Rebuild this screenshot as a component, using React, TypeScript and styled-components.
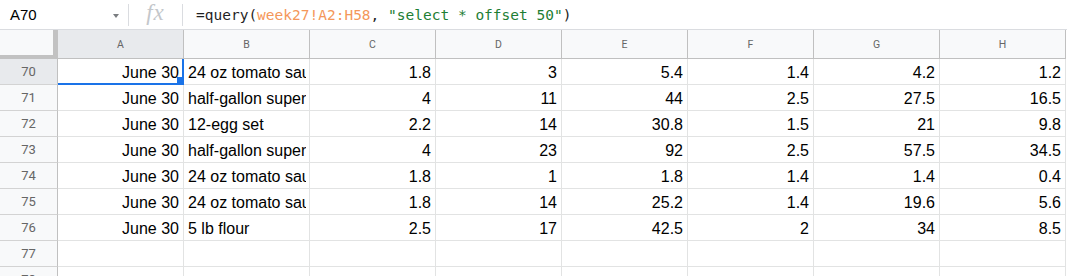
import React from 'react';
import styled, { createGlobalStyle } from 'styled-components';

const GlobalStyle = createGlobalStyle`
  body {
    margin: 0;
    background: #fff;
    overflow: hidden;
  }
`;

const Sheet = styled.div`
  width: 1067px;
  height: 276px;
  overflow: hidden;
  display: flex;
  flex-direction: column;
  background: #fff;
`;

const FormulaBar = styled.div`
  display: flex;
  align-items: center;
  height: 29px;
  flex: none;
  border-bottom: 1px solid #dadce0;
`;

const NameBox = styled.div`
  width: 128px;
  flex: none;
  display: flex;
  align-items: center;
  justify-content: space-between;
  box-sizing: border-box;
  padding: 0 9px 0 10px;
  font-family: 'Liberation Sans', Arial, sans-serif;
  font-size: 15px;
  color: #000;
`;

const DropArrow = styled.span`
  width: 0;
  height: 0;
  border-left: 3.5px solid transparent;
  border-right: 3.5px solid transparent;
  border-top: 4px solid #7a7d80;
  margin-top: 2px;
`;

const Divider = styled.div`
  width: 1px;
  height: 22px;
  flex: none;
  background: #dadce0;
`;

const FxIcon = styled.div`
  width: 53px;
  flex: none;
  text-align: center;
  font-family: 'Liberation Serif', serif;
  font-style: italic;
  font-size: 23px;
  line-height: 22px;
  letter-spacing: 1px;
  color: #c4c7cb;
  margin-top: -3px;
`;

const FormulaText = styled.div`
  padding-left: 13px;
  font-family: 'DejaVu Sans Mono', 'Liberation Mono', monospace;
  font-size: 14.5px;
  color: #1f1f1f;
  white-space: pre;
  margin-top: 1px;
`;

const Token = styled.span<{ $kind: 'range' | 'string' }>`
  color: ${(p) => (p.$kind === 'range' ? '#f4975a' : '#1e7e34')};
`;

const Grid = styled.div`
  display: grid;
  grid-template-columns: 58px repeat(8, 126px);
  grid-template-rows: 29px;
  grid-auto-rows: 26px;
`;

const Corner = styled.div`
  box-sizing: border-box;
  background: #f8f9fa;
  border-right: 5px solid #c2c2c2;
  border-bottom: 4px solid #c2c2c2;
`;

const ColHeader = styled.div<{ $active?: boolean }>`
  box-sizing: border-box;
  display: flex;
  align-items: center;
  justify-content: center;
  background: ${(p) => (p.$active ? '#e8eaed' : '#f8f9fa')};
  border-right: 1px solid #c0c0c0;
  border-bottom: 1px solid #c0c0c0;
  font-family: Roboto, 'Liberation Sans', sans-serif;
  font-size: 10.5px;
  color: #666;
  padding-top: 1px;
`;

const RowHeader = styled.div<{ $active?: boolean }>`
  box-sizing: border-box;
  display: flex;
  align-items: center;
  justify-content: center;
  background: ${(p) => (p.$active ? '#e8eaed' : '#f8f9fa')};
  border-right: 1px solid #c0c0c0;
  border-bottom: 1px solid #d3d3d3;
  font-family: Roboto, 'Liberation Sans', sans-serif;
  font-size: 13px;
  color: #666;
`;

const Cell = styled.div<{ $align?: 'left' | 'right' }>`
  box-sizing: border-box;
  min-width: 0;
  display: flex;
  align-items: flex-end;
  justify-content: ${(p) => (p.$align === 'right' ? 'flex-end' : 'flex-start')};
  padding: 0 4px 2px 4px;
  border-right: 1px solid #e2e3e3;
  border-bottom: 1px solid #e2e3e3;
  font-family: 'Liberation Sans', Arial, sans-serif;
  font-size: 16px;
  line-height: 18px;
  color: #000;
  white-space: nowrap;
  overflow: hidden;
`;

// text is clipped at the cell's inner padding, like the sheet does
const Clip = styled.span`
  display: block;
  min-width: 0;
  flex: 1;
  overflow: hidden;
  margin-right: -1px;
`;

const SelectedCell = styled(Cell)`
  position: relative;
  overflow: visible;
  z-index: 1;
`;

const Selection = styled.div`
  position: absolute;
  top: 0;
  left: 0;
  right: -1px;
  bottom: -1px;
  border-right: 2px solid #1a73e8;
  border-bottom: 2px solid #1a73e8;
  pointer-events: none;
`;

const FillHandle = styled.div`
  position: absolute;
  right: -2px;
  bottom: -2px;
  width: 7px;
  height: 8px;
  background: #1a73e8;
`;

const columns = ['A', 'B', 'C', 'D', 'E', 'F', 'G', 'H'];

type Row = { n: number; date?: string; item?: string; values?: string[] };

const rows: Row[] = [
  { n: 70, date: 'June 30', item: '24 oz tomato sauce', values: ['1.8', '3', '5.4', '1.4', '4.2', '1.2'] },
  { n: 71, date: 'June 30', item: 'half-gallon supermarket milk', values: ['4', '11', '44', '2.5', '27.5', '16.5'] },
  { n: 72, date: 'June 30', item: '12-egg set', values: ['2.2', '14', '30.8', '1.5', '21', '9.8'] },
  { n: 73, date: 'June 30', item: 'half-gallon supermarket milk', values: ['4', '23', '92', '2.5', '57.5', '34.5'] },
  { n: 74, date: 'June 30', item: '24 oz tomato sauce', values: ['1.8', '1', '1.8', '1.4', '1.4', '0.4'] },
  { n: 75, date: 'June 30', item: '24 oz tomato sauce', values: ['1.8', '14', '25.2', '1.4', '19.6', '5.6'] },
  { n: 76, date: 'June 30', item: '5 lb flour', values: ['2.5', '17', '42.5', '2', '34', '8.5'] },
  { n: 77 },
  { n: 78 },
];

const App: React.FC = () => {
  return (
    <Sheet>
      <GlobalStyle />
      <FormulaBar>
        <NameBox>
          A70
          <DropArrow />
        </NameBox>
        <Divider />
        <FxIcon>fx</FxIcon>
        <Divider />
        <FormulaText>
          =query(<Token $kind="range">week27!A2:H58</Token>, <Token $kind="string">"select * offset 50"</Token>)
        </FormulaText>
      </FormulaBar>
      <Grid>
        <Corner />
        {columns.map((c) => (
          <ColHeader key={c} $active={c === 'A'}>
            {c}
          </ColHeader>
        ))}
        {rows.map((row) => {
          const selected = row.n === 70;
          const DateCell = selected ? SelectedCell : Cell;
          return (
            <React.Fragment key={row.n}>
              <RowHeader $active={selected}>{row.n}</RowHeader>
              <DateCell $align="right">
                {row.date}
                {selected && (
                  <Selection>
                    <FillHandle />
                  </Selection>
                )}
              </DateCell>
              <Cell>
                <Clip>{row.item}</Clip>
              </Cell>
              {Array.from({ length: 6 }).map((_, i) => (
                <Cell key={i} $align="right">
                  {row.values ? row.values[i] : ''}
                </Cell>
              ))}
            </React.Fragment>
          );
        })}
      </Grid>
    </Sheet>
  );
};

export default App;
